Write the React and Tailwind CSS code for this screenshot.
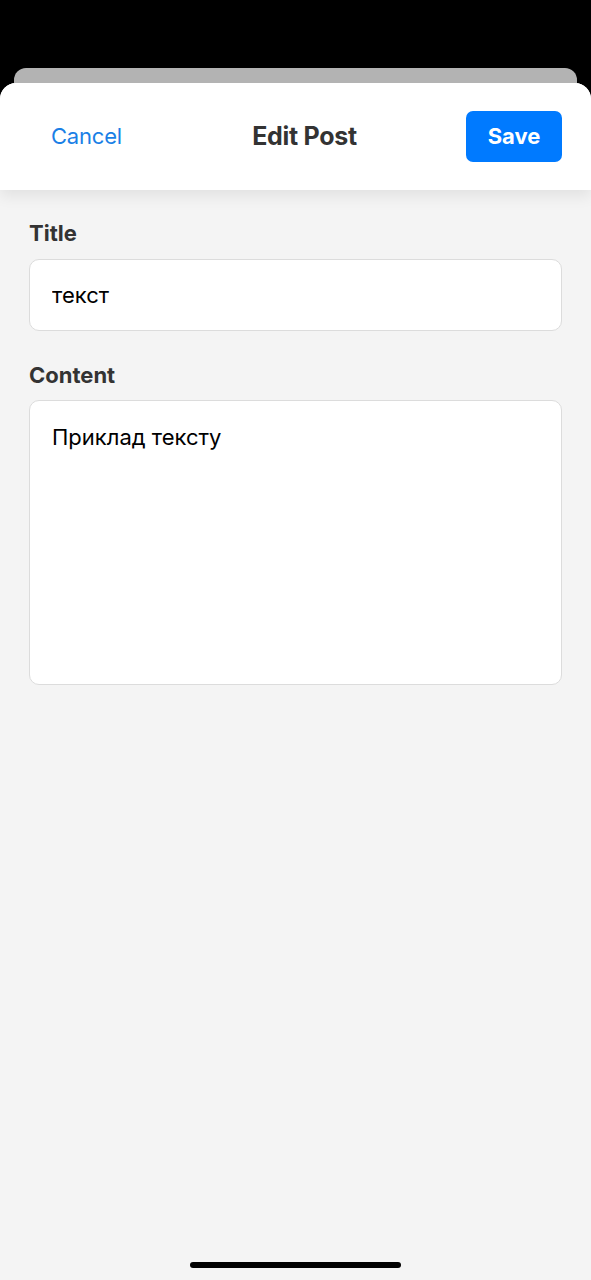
import React, { useState } from 'react';

const EditPostSheet = () => {
  const [title, setTitle] = useState('текст');
  const [content, setContent] = useState('Приклад тексту');

  return (
    <div className="min-h-[1280px] bg-black flex flex-col pt-[68px] font-['Inter',sans-serif]">
      {/* карточка позади */}
      <div className="mx-[14px] h-[15px] bg-[#b3b3b3] rounded-t-[12px]" />

      {/* лист */}
      <div className="flex-1 flex flex-col bg-[#f4f4f4] rounded-t-[16px] overflow-hidden">
        <div className="relative z-10 flex items-center justify-between bg-white pl-[51px] pr-[29px] py-[28px] shadow-[0_6px_14px_rgba(0,0,0,0.08)]">
          <button className="text-[22px] text-[#1a7fe6] tracking-[-0.2px]">Cancel</button>
          <h1 className="ml-[21px] text-[25px] font-bold text-[#333] tracking-[-0.3px]">Edit Post</h1>
          <button className="h-[51px] w-[96px] rounded-[7px] bg-[#007aff] text-white text-[22px] font-bold">
            Save
          </button>
        </div>

        <div className="flex-1 flex flex-col px-[29px] pt-[31px]">
          <label className="text-[22px] leading-[24px] font-bold text-[#333]">Title</label>
          <input
            className="mt-[14px] h-[72px] w-full rounded-[10px] border border-[#dcdcdc] bg-white px-[22px] text-[22px] text-black outline-none"
            value={title}
            onChange={e => setTitle(e.target.value)}
          />

          <label className="mt-[32px] text-[22px] leading-[24px] font-bold text-[#333]">Content</label>
          <textarea
            className="mt-[13px] h-[285px] w-full resize-none rounded-[10px] border border-[#dcdcdc] bg-white px-[22px] pt-[22px] text-[22px] leading-[28px] text-black outline-none"
            value={content}
            onChange={e => setContent(e.target.value)}
          />

          <div className="flex-1" />
          <div className="mx-auto mb-[12px] h-[6px] w-[211px] rounded-full bg-black" />
        </div>
      </div>
    </div>
  );
};

export default function App() {
  return <EditPostSheet />;
}
